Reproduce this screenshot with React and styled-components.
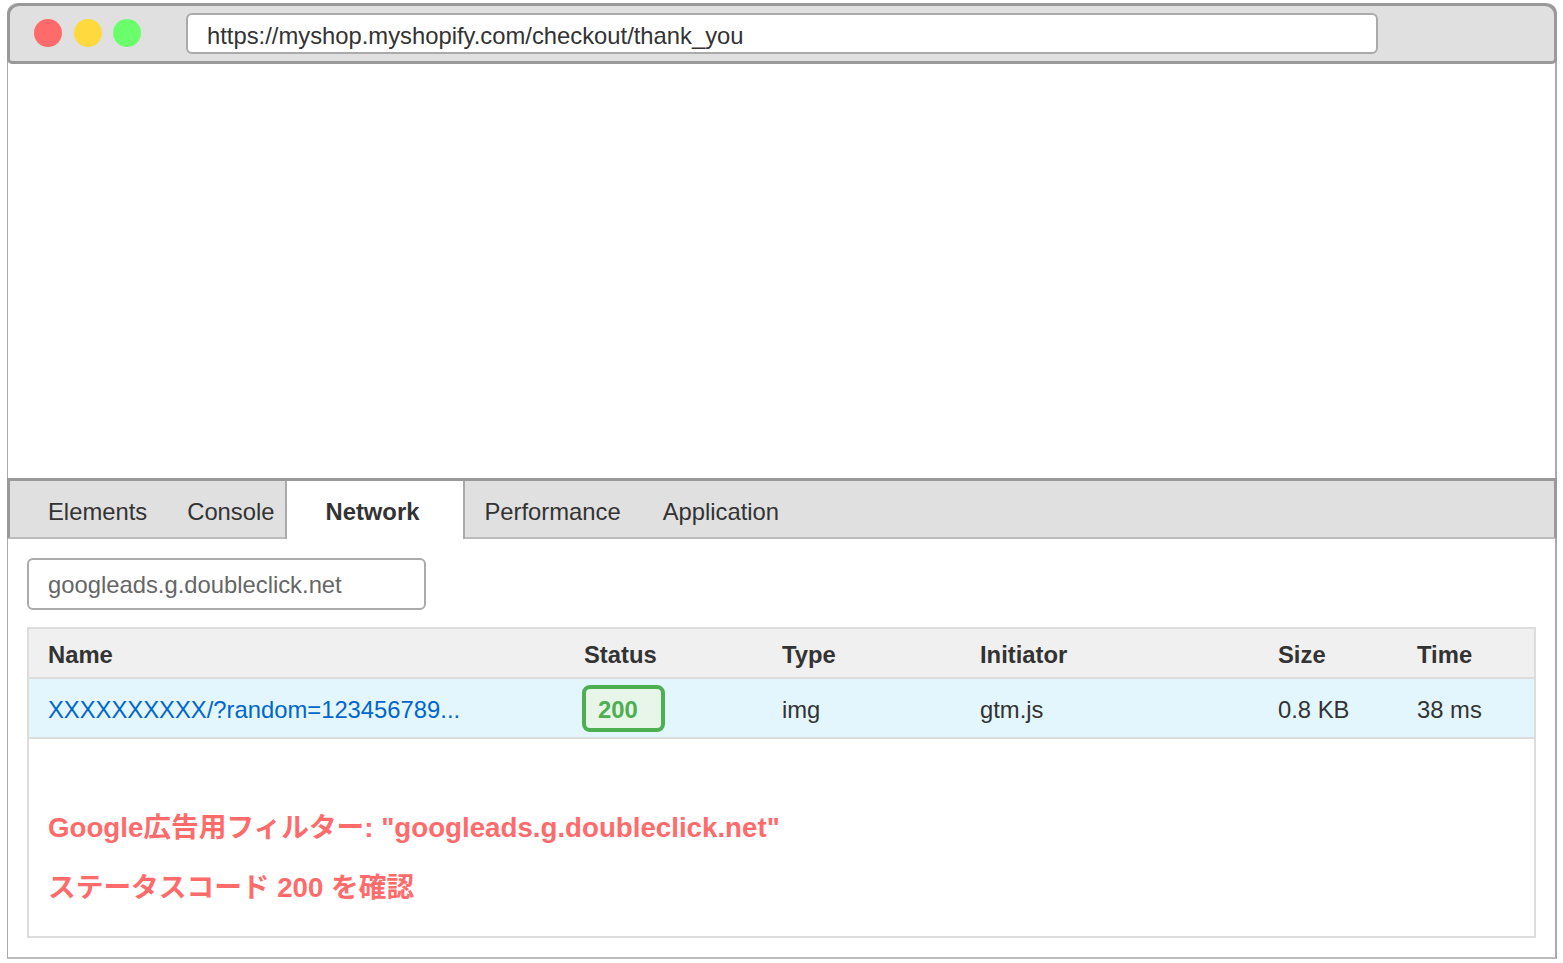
import React from 'react'
import styled, { createGlobalStyle } from 'styled-components'

const GlobalStyle = createGlobalStyle`
  html, body {
    margin: 0;
    background: #fff;
  }
  * {
    box-sizing: border-box;
  }
`

const Frame = styled.div`
  width: 1550px;
  height: 956px;
  margin: 3px 0 0 7px;
  display: flex;
  flex-direction: column;
  color: #333;
  font-family: 'Liberation Sans', Arial, sans-serif;
  font-size: 23.8px;
  border: solid #aaa;
  border-width: 0 2px 2px 1px;
  border-bottom-color: #bbb;
  border-radius: 10px 10px 0 0;
`

const TitleBar = styled.div`
  flex: 0 0 61px;
  margin: 0 -2px 0 -1px;
  display: flex;
  align-items: center;
  padding: 0 0 2px 24px;
  background: #e0e0e0;
  border: 3px solid #999;
  border-radius: 12px 12px 5px 5px;
`

const Dot = styled.span`
  width: 28px;
  height: 28px;
  margin-right: 11.5px;
  border-radius: 50%;
  background: ${props => props.color};
`

const UrlBar = styled.div`
  width: 1192px;
  height: 41px;
  margin: 2px 0 0 33.5px;
  padding: 4px 19px 0;
  display: flex;
  align-items: center;
  background: #fff;
  border: 2px solid #aaa;
  border-radius: 6px;
`

const Viewport = styled.div`
  flex: 0 0 414px;
`

const Tabs = styled.div`
  flex: 0 0 61px;
  margin: 0 -2px 0 -1px;
  display: flex;
  background: #e0e0e0;
  border: solid #999;
  border-width: 3px 3px 2px 3px;
  border-bottom-color: #bbb;
`

const Tab = styled.div`
  display: flex;
  align-items: center;
  margin-bottom: -2px;
  padding: 4px ${props => props.$right}px 0 ${props => props.$left}px;
  font-weight: ${props => props.$active ? 700 : 400};
  background: ${props => props.$active ? '#fff' : 'transparent'};
  border: solid #aaa;
  border-width: 0 ${props => props.$active ? '2px' : 0};
`

const Content = styled.div`
  flex: 1;
  display: flex;
  flex-direction: column;
  padding: 19px;
`

const Filter = styled.div`
  width: 399px;
  height: 52px;
  padding: 1px 19px 0;
  display: flex;
  align-items: center;
  color: #666;
  border: 2px solid #aaa;
  border-radius: 6px;
`

const Table = styled.div`
  flex: 1;
  margin-top: 17px;
  border: 2px solid #ddd;
`

const Row = styled.div`
  height: ${props => props.$head ? 50 : 60}px;
  padding: ${props => props.$head ? 4 : 3}px 0 0 19px;
  display: grid;
  grid-template-columns: 536px 198px 198px 298px 139px 1fr;
  align-items: center;
  font-weight: ${props => props.$head ? 700 : 400};
  background: ${props => props.$head ? '#f0f0f0' : '#e3f6fe'};
  border-bottom: 2px solid #ddd;
`

const NameLink = styled.span`
  color: #0066cc;
`

const StatusBadge = styled.span`
  width: 83px;
  height: 47px;
  margin: -2px 0 0 -2px;
  padding: 2px 0 0 12px;
  display: flex;
  align-items: center;
  font-weight: 700;
  color: #4caf50;
  background: #e8f5e9;
  border: 4px solid #4caf50;
  border-radius: 8px;
`

const Notes = styled.div`
  padding: 71px 19px 0;
  display: flex;
  flex-direction: column;
  gap: 24px;
`

const Note = styled.div`
  font-family: 'Liberation Sans', 'Noto Sans CJK JP', sans-serif;
  font-size: 27.7px;
  line-height: 36px;
  font-weight: 700;
  color: #ff6b6b;
`

export default function App() {
  return (
    <>
      <GlobalStyle />
      <Frame>
        <TitleBar>
          <Dot color="#ff6b6b" />
          <Dot color="#ffd93d" />
          <Dot color="#6bff6b" />
          <UrlBar>https://myshop.myshopify.com/checkout/thank_you</UrlBar>
        </TitleBar>
        <Viewport />
        <Tabs>
          <Tab $left={38} $right={20}>Elements</Tab>
          <Tab $left={20} $right={10}>Console</Tab>
          <Tab $active $left={39} $right={44}>Network</Tab>
          <Tab $left={19} $right={22}>Performance</Tab>
          <Tab $left={20} $right={20}>Application</Tab>
        </Tabs>
        <Content>
          <Filter>googleads.g.doubleclick.net</Filter>
          <Table>
            <Row $head>
              <span>Name</span>
              <span>Status</span>
              <span>Type</span>
              <span>Initiator</span>
              <span>Size</span>
              <span>Time</span>
            </Row>
            <Row>
              <NameLink>XXXXXXXXXX/?random=123456789...</NameLink>
              <span><StatusBadge>200</StatusBadge></span>
              <span>img</span>
              <span>gtm.js</span>
              <span>0.8 KB</span>
              <span>38 ms</span>
            </Row>
            <Notes>
              <Note>Google広告用フィルター: "googleads.g.doubleclick.net"</Note>
              <Note>ステータスコード 200 を確認</Note>
            </Notes>
          </Table>
        </Content>
      </Frame>
    </>
  )
}
